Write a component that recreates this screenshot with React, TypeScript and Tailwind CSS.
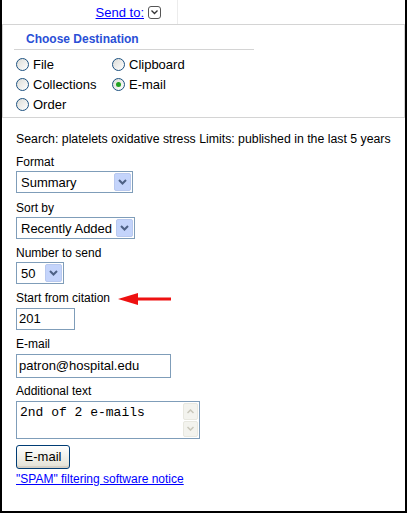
import React from 'react';

const Radio = ({ checked, label }: { checked?: boolean; label: string }) => (
  <div className="flex items-center h-[20px]">
    <span className="relative w-[13px] h-[13px] rounded-full border border-[#1c5180] bg-gradient-to-br from-[#dcdcd7] to-[#ffffff] flex items-center justify-center">
      {checked && <span className="w-[5px] h-[5px] rounded-full bg-[#21a121]" />}
    </span>
    <span className="ml-[4px] text-[13px] leading-[15px]">{label}</span>
  </div>
);

const Chevron = () => (
  <svg width="9" height="6" viewBox="0 0 9 6">
    <path d="M1 1 L4.5 4.5 L8 1" fill="none" stroke="#4d6185" strokeWidth="2" />
  </svg>
);

const FakeSelect = ({ value, width }: { value: string; width: string }) => (
  <div className={`${width} h-[22px] border border-[#7f9db9] bg-white flex items-center justify-between pl-[4px] pr-[1px]`}>
    <span className="text-[13px] leading-[15px] whitespace-nowrap">{value}</span>
    <span className="w-[17px] h-[18px] rounded-[2px] border border-[#b9c9ef] bg-[#c4d4fb] flex items-center justify-center">
      <Chevron />
    </span>
  </div>
);

const Label = ({ children }: { children: React.ReactNode }) => (
  <div className="text-[12px] leading-[15px] text-black">{children}</div>
);

export default function App() {
  return (
    <div className="w-[407px] h-[513px] bg-white border-l-2 border-r-2 border-b-2 border-black font-['Liberation_Sans',Arial,sans-serif] text-black overflow-hidden">
      {/* top bar */}
      <div className="h-[24px] flex">
        <div className="w-[176px] border-r border-[#ececec] flex items-center justify-end pr-[16px]">
          <a href="#" className="text-[13px] leading-[15px] text-[#0000ff] underline">Send to:</a>
          <span className="ml-[4px] w-[13px] h-[13px] rounded-[3px] border border-[#555] flex items-center justify-center">
            <svg width="7" height="5" viewBox="0 0 7 5">
              <path d="M0.5 0.5 L3.5 3.5 L6.5 0.5" fill="none" stroke="#333" strokeWidth="1.3" />
            </svg>
          </span>
        </div>
      </div>

      {/* destination panel */}
      <div className="h-[94px] border border-[#d4d4d4] pt-[4px]">
        <div className="ml-[11px] w-[240px] border-b border-[#d4d4d4] pl-[12px] h-[21px] flex items-center">
          <span className="text-[12px] font-bold text-[#2a4fd6] leading-[15px]">Choose Destination</span>
        </div>
        <div className="mt-[4px] ml-[13px] flex">
          <div className="w-[96px] flex flex-col">
            <Radio label="File" />
            <Radio label="Collections" />
            <Radio label="Order" />
          </div>
          <div className="flex flex-col">
            <Radio label="Clipboard" />
            <Radio checked label="E-mail" />
          </div>
        </div>
      </div>

      {/* form */}
      <div className="pl-[14px] flex flex-col">
        <div className="mt-[14px] text-[12.3px] leading-[15px] whitespace-nowrap">
          Search: platelets oxidative stress Limits: published in the last 5 years
        </div>

        <div className="mt-[8px]"><Label>Format</Label></div>
        <div className="mt-[1px]"><FakeSelect value="Summary" width="w-[117px]" /></div>

        <div className="mt-[8px]"><Label>Sort by</Label></div>
        <div className="mt-[1px]"><FakeSelect value="Recently Added" width="w-[119px]" /></div>

        <div className="mt-[7px]"><Label>Number to send</Label></div>
        <div className="mt-[1px]"><FakeSelect value="50" width="w-[48px]" /></div>

        <div className="mt-[7px] flex items-center">
          <Label>Start from citation</Label>
          <svg className="ml-[8px]" width="53" height="12" viewBox="0 0 53 12">
            <path d="M18 6 H53" stroke="#ee1111" strokeWidth="3" />
            <path d="M0 6 L20 0 L20 12 Z" fill="#ee1111" />
          </svg>
        </div>
        <div className="mt-[2px] w-[59px] h-[22px] border border-[#7f9db9] flex items-center pl-[2px] text-[13px]">201</div>

        <div className="mt-[7px]"><Label>E-mail</Label></div>
        <div className="mt-[2px] w-[155px] h-[24px] border border-[#7f9db9] flex items-center pl-[2px] text-[13px]">patron@hospital.edu</div>

        <div className="mt-[6px]"><Label>Additional text</Label></div>
        <div className="mt-[2px] w-[184px] h-[38px] border border-[#7f9db9] flex">
          <div className="flex-1 pl-[3px] pt-[3px] font-['Liberation_Mono','Courier_New',monospace] text-[13px] leading-[15px]">2nd of 2 e-mails</div>
          <div className="w-[17px] flex flex-col gap-[1px] p-[1px]">
            <div className="h-[17px] rounded-[2px] border border-[#e8e8e0] bg-[#f3f3ee] flex items-center justify-center">
              <svg width="7" height="5" viewBox="0 0 7 5"><path d="M0.5 4 L3.5 1 L6.5 4" fill="none" stroke="#c9c7ba" strokeWidth="1.5" /></svg>
            </div>
            <div className="h-[17px] rounded-[2px] border border-[#e8e8e0] bg-[#f3f3ee] flex items-center justify-center">
              <svg width="7" height="5" viewBox="0 0 7 5"><path d="M0.5 1 L3.5 4 L6.5 1" fill="none" stroke="#c9c7ba" strokeWidth="1.5" /></svg>
            </div>
          </div>
        </div>

        <div className="mt-[5px]">
          <button className="w-[54px] h-[24px] rounded-[3px] border border-[#003c74] bg-gradient-to-b from-[#ffffff] to-[#e3e1d5] text-[13px] leading-[15px] shadow-[inset_0_-2px_0_#d6d0c5]">
            E-mail
          </button>
        </div>

        <a href="#" className="mt-[3px] text-[12px] leading-[15px] text-[#0000ff] underline w-fit">"SPAM" filtering software notice</a>
      </div>
    </div>
  );
}
